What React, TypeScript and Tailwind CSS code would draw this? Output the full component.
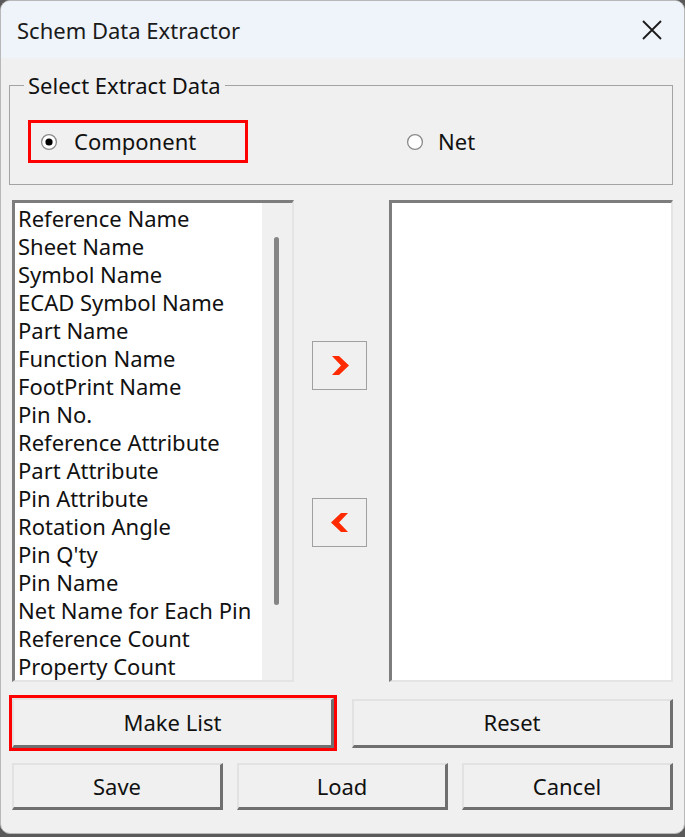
import React from "react";

const items = [
  "Reference Name",
  "Sheet Name",
  "Symbol Name",
  "ECAD Symbol Name",
  "Part Name",
  "Function Name",
  "FootPrint Name",
  "Pin No.",
  "Reference Attribute",
  "Part Attribute",
  "Pin Attribute",
  "Rotation Angle",
  "Pin Q'ty",
  "Pin Name",
  "Net Name for Each Pin",
  "Reference Count",
  "Property Count",
];

function Radio({ checked }: { checked: boolean }) {
  return (
    <svg width="18" height="18" viewBox="0 0 18 18" className="shrink-0">
      <circle cx="9" cy="9" r="7.4" fill="#ffffff" stroke="#8a8a8a" strokeWidth="1.3" />
      {checked && <circle cx="9" cy="9" r="3.6" fill="#000000" />}
    </svg>
  );
}

function Chevron({ dir }: { dir: "r" | "l" }) {
  return (
    <svg width="20" height="19" viewBox="0 0 20 19">
      {dir === "r" ? (
        <polygon points="2,0 9,0 19,9.5 9,19 2,19 11,9.5" fill="#ff2a00" />
      ) : (
        <polygon points="18,0 11,0 1,9.5 11,19 18,19 9,9.5" fill="#ff2a00" />
      )}
    </svg>
  );
}

function Btn({ label, cls }: { label: string; cls: string }) {
  return (
    <div
      className={`flex items-center justify-center bg-[#f0f0f0] border-t-2 border-l-2 border-t-[#e2e2e2] border-l-[#e2e2e2] border-r-[3px] border-b-[3px] border-r-[#6f6f6f] border-b-[#6f6f6f] text-[22px] text-[#111] ${cls}`}
    >
      {label}
    </div>
  );
}

export default function App() {
  return (
    <div
      className="w-[685px] h-[837px] bg-[#5a5a5a]"
      style={{ fontFamily: '"Noto Sans", "Open Sans", sans-serif' }}
    >
      <div className="w-[685px] h-[834px] bg-[#f0f0f0] border border-[#b8b8b8] rounded-[10px] overflow-hidden flex flex-col">
        {/* Title bar */}
        <div className="h-[57px] bg-[#eff3fa] flex items-center justify-between pl-[16px] pr-[21px] shrink-0">
          <span className="text-[22px] text-[#1a1a1a] leading-none">Schem Data Extractor</span>
          <svg width="22" height="22" viewBox="0 0 22 22">
            <path d="M2 2 L20 20 M20 2 L2 20" stroke="#1a1a1a" strokeWidth="1.8" />
          </svg>
        </div>

        <div className="px-[8px] flex flex-col">
          {/* Group box */}
          <fieldset className="mt-[13px] border border-[#a3a3a3] h-[114px] mr-[3px]">
            <legend className="ml-[14px] px-[4px] text-[22px] leading-[28px] text-[#111]">
              Select Extract Data
            </legend>
            <div className="flex items-center mt-[21px]">
              <div className="ml-[18px] w-[220px] h-[43px] border-[3px] border-[#ff0000] flex items-center pl-[9px]">
                <Radio checked />
                <span className="ml-[16px] text-[22px] text-[#111]">Component</span>
              </div>
              <div className="ml-[158px] flex items-center">
                <Radio checked={false} />
                <span className="ml-[14px] text-[22px] text-[#111]">Net</span>
              </div>
            </div>
          </fieldset>

          {/* Lists row */}
          <div className="flex mt-[15px] pl-[3px]">
            <div className="w-[282px] h-[482px] bg-white border-t-[3px] border-l-[3px] border-t-[#7d7d7d] border-l-[#7d7d7d] border-r-2 border-b-2 border-r-[#e4e4e4] border-b-[#e4e4e4] flex">
              <div className="flex-1 pl-[3px] pt-[1px]">
                {items.map((t) => (
                  <div key={t} className="h-[28px] leading-[28px] text-[22px] text-[#111] whitespace-nowrap">
                    {t}
                  </div>
                ))}
              </div>
              <div className="w-[30px] bg-[#f0f0f0] flex justify-center pt-[34px] pr-[2px]">
                <div className="w-[5px] h-[368px] bg-[#858585] rounded-full" />
              </div>
            </div>

            <div className="w-[95px] flex flex-col items-start">
              <div className="ml-[18px] mt-[141px] w-[55px] h-[49px] border border-[#a0a0a0] bg-[#f0f0f0] flex items-center justify-center">
                <Chevron dir="r" />
              </div>
              <div className="ml-[18px] mt-[108px] w-[55px] h-[49px] border border-[#a0a0a0] bg-[#f0f0f0] flex items-center justify-center">
                <Chevron dir="l" />
              </div>
            </div>

            <div className="w-[284px] h-[482px] bg-white border-t-[3px] border-l-[3px] border-t-[#7d7d7d] border-l-[#7d7d7d] border-r-2 border-b-2 border-r-[#e4e4e4] border-b-[#e4e4e4]" />
          </div>

          {/* Buttons row 1 */}
          <div className="flex mt-[13px] items-center">
            <div className="border-[3px] border-[#ff0000] p-0">
              <Btn label="Make List" cls="w-[322px] h-[50px]" />
            </div>
            <Btn label="Reset" cls="ml-[15px] w-[321px] h-[49px]" />
          </div>

          {/* Buttons row 2 */}
          <div className="flex mt-[12px] pl-[3px] gap-[14px]">
            <Btn label="Save" cls="w-[211px] h-[47px]" />
            <Btn label="Load" cls="w-[211px] h-[47px]" />
            <Btn label="Cancel" cls="w-[211px] h-[47px]" />
          </div>
        </div>
      </div>
    </div>
  );
}
